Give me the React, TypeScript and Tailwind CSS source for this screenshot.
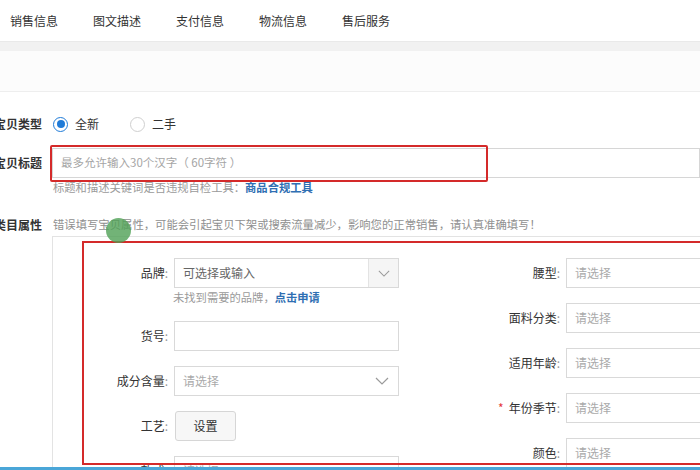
import React from "react";

const F = { fontFamily: '"Noto Sans CJK SC", "Noto Sans", sans-serif' };

function Chevron({ className }: { className?: string }) {
  return (
    <svg viewBox="0 0 14 8" className={className} fill="none" stroke="#9a9a9a" strokeWidth="1.2">
      <path d="M1 1 L7 7 L13 1" />
    </svg>
  );
}

function Radio({ checked, label }: { checked?: boolean; label: string }) {
  return (
    <div className="flex items-center gap-[7px]">
      <div
        className={
          checked
            ? "w-[15px] h-[15px] rounded-full border border-[#1f7bd8] flex items-center justify-center bg-white"
            : "w-[15px] h-[15px] rounded-full border border-[#cfcfcf] bg-white"
        }
      >
        {checked && <div className="w-[8px] h-[8px] rounded-full bg-[#1f7bd8]" />}
      </div>
      <span className="text-[12px] text-[#333]">{label}</span>
    </div>
  );
}

function Field({
  label,
  children,
  labelW,
  req,
}: {
  label: string;
  children: React.ReactNode;
  labelW: string;
  req?: boolean;
}) {
  return (
    <div className="flex items-center h-[30px]">
      <div className={`${labelW} shrink-0 text-right text-[12px] text-[#333] whitespace-nowrap pr-[6px]`}>
        {req && <span className="text-[#e4393c] mr-[5px]">*</span>}
        {label}
        <span className="text-[#999]">:</span>
      </div>
      {children}
    </div>
  );
}

function Select({ w, text, chevron }: { w: string; text?: string; chevron?: boolean }) {
  return (
    <div className={`${w} h-[30px] border border-[#d9d9d9] bg-white flex items-center justify-between px-[8px] shrink-0`}>
      <span className="text-[12px] text-[#aaa]">{text}</span>
      {chevron && <Chevron className="w-[14px] h-[8px] mr-[1px]" />}
    </div>
  );
}

export default function App() {
  return (
    <div style={F} className="w-[700px] h-[470px] overflow-hidden bg-white relative">
      {/* Tabs */}
      <div className="h-[41px] flex items-center pl-[10px] gap-[35px] bg-white">
        {["销售信息", "图文描述", "支付信息", "物流信息", "售后服务"].map((t) => (
          <span key={t} className="text-[12px] text-[#333] w-[48px] whitespace-nowrap">
            {t}
          </span>
        ))}
      </div>
      <div className="h-[10px] bg-[#f1f1f1] border-t border-[#e9e9e9]" />
      <div className="h-[41px] bg-[#fcfcfc] border-b border-[#eeeeee]" />

      {/* 宝贝类型 */}
      <div className="flex items-center h-[20px] mt-[22px]">
        <div className="w-[42px] shrink-0 text-right text-[12px] font-semibold text-[#333] whitespace-nowrap flex justify-end">
          <span>宝贝类型</span>
        </div>
        <div className="ml-[11px] flex items-center gap-[31px]">
          <Radio checked label="全新" />
          <Radio label="二手" />
        </div>
      </div>

      {/* 宝贝标题 */}
      <div className="flex items-center h-[30px] mt-[14px]">
        <div className="w-[42px] shrink-0 text-[12px] font-semibold text-[#333] whitespace-nowrap flex justify-end">
          <span>宝贝标题</span>
        </div>
        <div className="ml-[10px] flex-1 h-[30px] border border-[#d6d6d6] flex items-center pl-[8px]">
          <span className="text-[11.5px] text-[#a5a5a5]">最多允许输入30个汉字（ 60字符 ）</span>
        </div>
      </div>
      <div className="h-[18px] flex items-center pl-[53px] text-[11.3px] text-[#9a9a9a] whitespace-nowrap">
        标题和描述关键词是否违规自检工具：<span className="text-[#2f6fb3] font-semibold">商品合规工具</span>
      </div>

      {/* 类目属性 */}
      <div className="flex items-center h-[18px] mt-[20px]">
        <div className="w-[42px] shrink-0 text-[12px] font-semibold text-[#333] whitespace-nowrap flex justify-end">
          <span>类目属性</span>
        </div>
        <div className="ml-[11px] text-[11.35px] text-[#8f8f8f] whitespace-nowrap">
          错误填写宝贝属性，可能会引起宝贝下架或搜索流量减少，影响您的正常销售，请认真准确填写！
        </div>
      </div>

      {/* Panel */}
      <div className="ml-[52px] mt-[2px] border-l border-t border-[#e3e3e3] h-[260px] pt-[21px] flex">
        {/* left column */}
        <div className="w-[346px] shrink-0 flex flex-col gap-[15px]">
          <div className="flex flex-col">
            <Field label="品牌" labelW="w-[121px]">
              <div className="w-[225px] h-[30px] border border-[#d9d9d9] flex shrink-0">
                <div className="flex-1 flex items-center px-[8px] text-[12px] text-[#666]">可选择或输入</div>
                <div className="w-[30px] bg-[#f5f5f5] border-l border-[#e3e3e3] flex items-center justify-center">
                  <Chevron className="w-[12px] h-[7px]" />
                </div>
              </div>
            </Field>
            <div className="h-[18px] pl-[120px] flex items-center text-[11.3px] text-[#9a9a9a] whitespace-nowrap">
              未找到需要的品牌，<span className="text-[#2f6fb3] font-semibold">点击申请</span>
            </div>
          </div>
          <Field label="货号" labelW="w-[121px]">
            <Select w="w-[225px]" />
          </Field>
          <Field label="成分含量" labelW="w-[121px]">
            <Select w="w-[225px]" text="请选择" chevron />
          </Field>
          <Field label="工艺" labelW="w-[121px]">
            <div className="w-[61px] h-[30px] border border-[#d6d6d6] rounded-[3px] bg-[#f7f7f7] flex items-center justify-center text-[12px] text-[#333] ml-[1px]">
              设置
            </div>
          </Field>
          <Field label="款式" labelW="w-[121px]">
            <Select w="w-[225px]" text="请选择" chevron />
          </Field>
        </div>
        {/* right column */}
        <div className="flex-1 flex flex-col gap-[15px] ml-[16px]">
          <Field label="腰型" labelW="w-[151px]">
            <Select w="w-[160px]" text="请选择" />
          </Field>
          <Field label="面料分类" labelW="w-[151px]">
            <Select w="w-[160px]" text="请选择" />
          </Field>
          <Field label="适用年龄" labelW="w-[151px]">
            <Select w="w-[160px]" text="请选择" />
          </Field>
          <Field label="年份季节" labelW="w-[151px]" req>
            <Select w="w-[160px]" text="请选择" />
          </Field>
          <Field label="颜色" labelW="w-[151px]">
            <Select w="w-[160px]" text="请选择" />
          </Field>
        </div>
      </div>

      {/* annotations */}
      <div className="absolute left-[50px] top-[145px] w-[438px] h-[37px] border-2 border-[#d42a2a] rounded-[2px]" />
      <div className="absolute left-[82px] top-[241px] w-[640px] h-[224px] border-2 border-[#d42a2a]" />
      <div className="absolute left-[106px] top-[218px] w-[25px] h-[25px] rounded-full bg-[#4fa055] opacity-80" />
      <div className="absolute left-0 bottom-0 w-full h-[3px] bg-[#4aa6d8]" />
    </div>
  );
}
